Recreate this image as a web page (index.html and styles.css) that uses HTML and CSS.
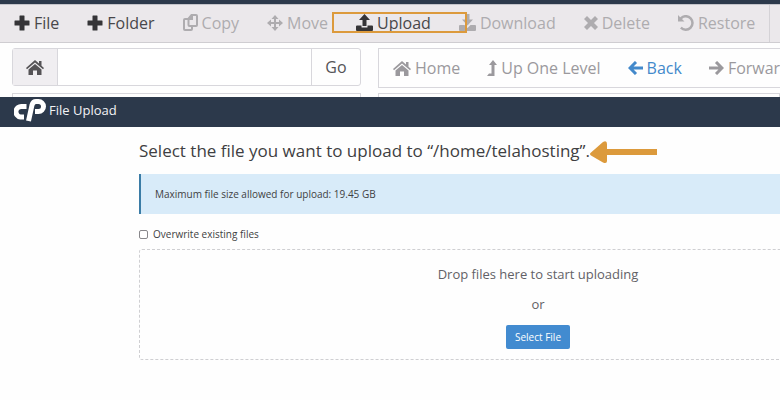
FILE: index.html
```html
<!DOCTYPE html>
<html lang="en">
<head>
    <meta charset="UTF-8">
    <meta name="viewport" content="width=device-width, initial-scale=1.0">
    <title>File Upload</title>
    <link rel="stylesheet" href="styles.css">
</head>
<body>
    <div class="file-manager">
        <div class="toolbar">
            <button class="tool"><svg width="16" height="16" viewBox="0 0 16 16"><path d="M6 0.500h4q.5 0 .5.5v4.500h4.500q.5 0 .5.5v4q0 .5-.5.5h-4.500V15q0 .5-.5.5H6q-.5 0-.5-.5v-4.500H1q-.5 0-.5-.5V6q0-.5.5-.5h4.500V1q0-.5.5-.5z"/></svg>File</button>
            <button class="tool"><svg width="16" height="16" viewBox="0 0 16 16"><path d="M6 0.500h4q.5 0 .5.5v4.500h4.500q.5 0 .5.5v4q0 .5-.5.5h-4.500V15q0 .5-.5.5H6q-.5 0-.5-.5v-4.500H1q-.5 0-.5-.5V6q0-.5.5-.5h4.500V1q0-.5.5-.5z"/></svg>Folder</button>
            <button class="tool" disabled><svg class="line" width="15" height="18" viewBox="0 0 15 18"><path d="M8.500 1H13q1 0 1 1v9q0 1-1 1H6.500q-1 0-1-1V4.500zM9 1v4H5.500M5.500 5H2Q1 5 1 6v9q0 1 1 1h6q1 0 1-1v-3"/></svg>Copy</button>
            <button class="tool" disabled><svg width="16" height="16" viewBox="0 0 16 16"><path d="M8 0l3.500 4H9v3h3V4.500L16 8l-4 3.500V9H9v3h2.500L8 16l-3.500-4H7V9H4v2.500L0 8l4-3.500V7h3V4H4.500z"/></svg>Move</button>
            <button class="tool tool-upload"><svg width="17" height="17" viewBox="0 0 17 17"><path d="M8.500 0L14 6h-3.500v6h-4V6H3zM1 11.500h4.500V13q0 .5.5.5h5q.5 0 .5-.5v-1.500H16q1 0 1 1V16q0 1-1 1H1q-1 0-1-1v-3.500q0-1 1-1z"/></svg>Upload</button>
            <button class="tool" disabled><svg width="17" height="17" viewBox="0 0 17 17"><path d="M6.500 0h4v5.500H14l-5.500 6-5.500-6h3.500zM1 11h4.500l3 3 3-3H16q1 0 1 1v4q0 1-1 1H1q-1 0-1-1v-4q0-1 1-1z"/></svg>Download</button>
            <button class="tool" disabled><svg width="14" height="14" viewBox="0 0 14 14"><path d="M3 0l4 4 4-4 3 3-4 4 4 4-3 3-4-4-4 4-3-3 4-4-4-4z"/></svg>Delete</button>
            <button class="tool" disabled><svg width="16" height="16" viewBox="0 0 16 16"><path d="M0 0l2.200 2.200A8 8 0 1 1 2 13.500l1.700-1.700A5.500 5.500 0 1 0 4 4l2.500 2.500H0z"/></svg>Restore</button>
            <span class="divider"></span>
        </div>

        <div class="panels">
            <form class="path-bar">
                <button type="button" class="path-home" aria-label="Home"><svg width="18" height="15" viewBox="0 0 18 15"><path d="M9 0l4 3.500V1h2.500v4.700L18 8l-1 1.200L9 2.500 1 9.200 0 8zM9 4l6.500 5.500V15H11v-4.500H7V15H2.500V9.500z"/></svg></button>
                <input type="text" aria-label="Path">
                <button type="button" class="go">Go</button>
            </form>
            <nav class="nav-bar">
                <a href="#"><svg width="18" height="15" viewBox="0 0 18 15"><path d="M9 0l4 3.500V1h2.500v4.700L18 8l-1 1.200L9 2.500 1 9.200 0 8zM9 4l6.500 5.500V15H11v-4.500H7V15H2.500V9.500z"/></svg>Home</a>
                <a href="#"><svg width="10" height="16" viewBox="0 0 10 16"><path d="M6 0l4 5H7.500v11H0l2-2.500h2.500V5H2z"/></svg>Up One Level</a>
                <a href="#" class="active"><svg class="arrow" width="15" height="14" viewBox="0 0 15 14"><path d="M8 1L2 7l6 6M2 7h13"/></svg>Back</a>
                <a href="#"><svg class="arrow" width="15" height="14" viewBox="0 0 15 14"><path d="M7 1l6 6-6 6M13 7H0"/></svg>Forward</a>
            </nav>
            <div class="panel-edge"></div>
            <div class="panel-edge"></div>
        </div>
    </div>

    <header class="title-bar">
        <svg class="logo" width="32" height="23" viewBox="0 0 32 23"><path d="M12.500 7.500H8a5 5 0 0 0-1.500 10.500H10"/><path d="M14.500 22L18 6q1-3.500 4-3.500h2.500a5 5 0 0 1 0 10H21"/></svg>
        <span>File Upload</span>
    </header>

    <main>
        <h1>Select the file you want to upload to “/home/telahosting”.<svg class="pointer" width="68" height="24" viewBox="0 0 68 24"><path d="M1 13.500L13 3q4-2 4 2v5h50v6H17v6q0 3-4 1.500L1 16.500q-2-1.500 0-3z"/></svg></h1>
        <div class="notice">Maximum file size allowed for upload: 19.45 GB</div>
        <label class="overwrite"><input type="checkbox">Overwrite existing files</label>
        <div class="drop-zone">
            <p>Drop files here to start uploading</p>
            <p>or</p>
            <button class="select-file">Select File</button>
        </div>
    </main>
</body>
</html>
```
FILE: styles.css
```css
* {
    box-sizing: border-box;
}

body {
    margin: 0;
    background: #fefefe;
    color: #3f3f42;
    font-family: "Open Sans", "Noto Sans", sans-serif;
    font-size: 16px;
    overflow: hidden;
}

button, input {
    font: inherit;
    color: inherit;
    margin: 0;
}

svg {
    fill: currentColor;
    flex: none;
}

.file-manager {
    border-top: 4px solid #2c394b;
    overflow: hidden;
}

.toolbar {
    display: flex;
    height: 39px;
    background: #ebe8eb;
    border-top: 1px solid #c4c4ca;
    border-bottom: 1px solid #cfcdd1;
}

.tool {
    display: flex;
    align-items: center;
    flex: none;
    gap: 4px;
    padding: 0 14px 2px;
    border: none;
    background: none;
    color: #48474a;
    white-space: nowrap;
}

.tool svg {
    color: #353437;
}

.tool:disabled, .tool:disabled svg {
    color: #aeacaf;
}

.line, .arrow {
    fill: none;
    stroke: currentColor;
    stroke-width: 2;
}

.tool-upload {
    position: relative;
}

.tool-upload::after {
    content: "";
    position: absolute;
    inset: 7px -22px 9px -10px;
    border: 2px solid #dc9a3c;
    z-index: 1;
}

.divider {
    flex: none;
    width: 1px;
    background: #d4d2d6;
}

.panels {
    display: grid;
    grid-template-columns: 349px 1fr;
    gap: 5px 17px;
    padding: 5px 0 0 12px;
}

.path-bar {
    display: flex;
    height: 38px;
    border: 1px solid #d8d7dc;
    border-radius: 3px;
}

.path-bar button {
    border: none;
    background: none;
    padding: 0;
    color: #555356;
}

.path-bar .path-home {
    width: 44px;
    background: #f0eef1;
    display: flex;
    align-items: center;
    justify-content: center;
}

.path-bar input {
    flex: 1;
    min-width: 0;
    border: 1px solid #d8d7dc;
    border-width: 0 1px;
    background: #fff;
}

.path-bar .go {
    width: 48px;
}

.nav-bar {
    display: flex;
    gap: 27px;
    height: 40px;
    padding: 0 14px;
    border: 1px solid #d8d7dc;
    border-right: none;
    overflow: hidden;
}

.nav-bar a {
    display: flex;
    align-items: center;
    flex: none;
    gap: 4px;
    color: #9b999d;
    text-decoration: none;
}

.nav-bar a.active {
    color: #4389cb;
}

.arrow {
    stroke-width: 3;
}

.panel-edge {
    height: 4px;
    border: 1px solid #d8d7dc;
    border-bottom: none;
}

.title-bar {
    display: flex;
    align-items: center;
    gap: 3px;
    height: 30px;
    padding: 0 14px 4px;
    background: #2c394b;
    color: #f2f3f5;
    font-size: 13px;
}

.logo {
    fill: none;
    stroke: #fff;
    stroke-width: 5;
}

/* the panel is wider than the window and runs off its right side */
main {
    margin: 0 -157px 0 139px;
    padding-top: 12px;
}

h1 {
    display: flex;
    align-items: center;
    margin: 0 0 11px;
    font-size: 17px;
    font-weight: 400;
    line-height: 24px;
}

.pointer {
    color: #dc9a3c;
    overflow: visible;
}

.notice {
    padding: 10px 14px;
    border-left: 2px solid #3b7ca6;
    background: #d8ebf9;
    font-size: 10px;
    line-height: 20px;
}

.overwrite {
    display: flex;
    align-items: center;
    gap: 5px;
    margin: 12px 0 7px;
    font-size: 10px;
    line-height: 16px;
}

.overwrite input {
    appearance: none;
    width: 9px;
    height: 9px;
    border: 1px solid #88878b;
    border-radius: 2px;
    background: #fff;
}

.drop-zone {
    padding: 10px 0;
    border: 1px dashed #cfcfd2;
    border-radius: 3px;
    text-align: center;
    color: #626166;
}

.drop-zone p {
    margin: 0 0 2px;
    font-size: 13px;
    line-height: 28px;
}

.select-file {
    height: 24px;
    margin: 5px 0 0;
    padding: 0 9px;
    border: none;
    border-radius: 2px;
    background: #428bd0;
    color: #fff;
    font-size: 10px;
}
```
